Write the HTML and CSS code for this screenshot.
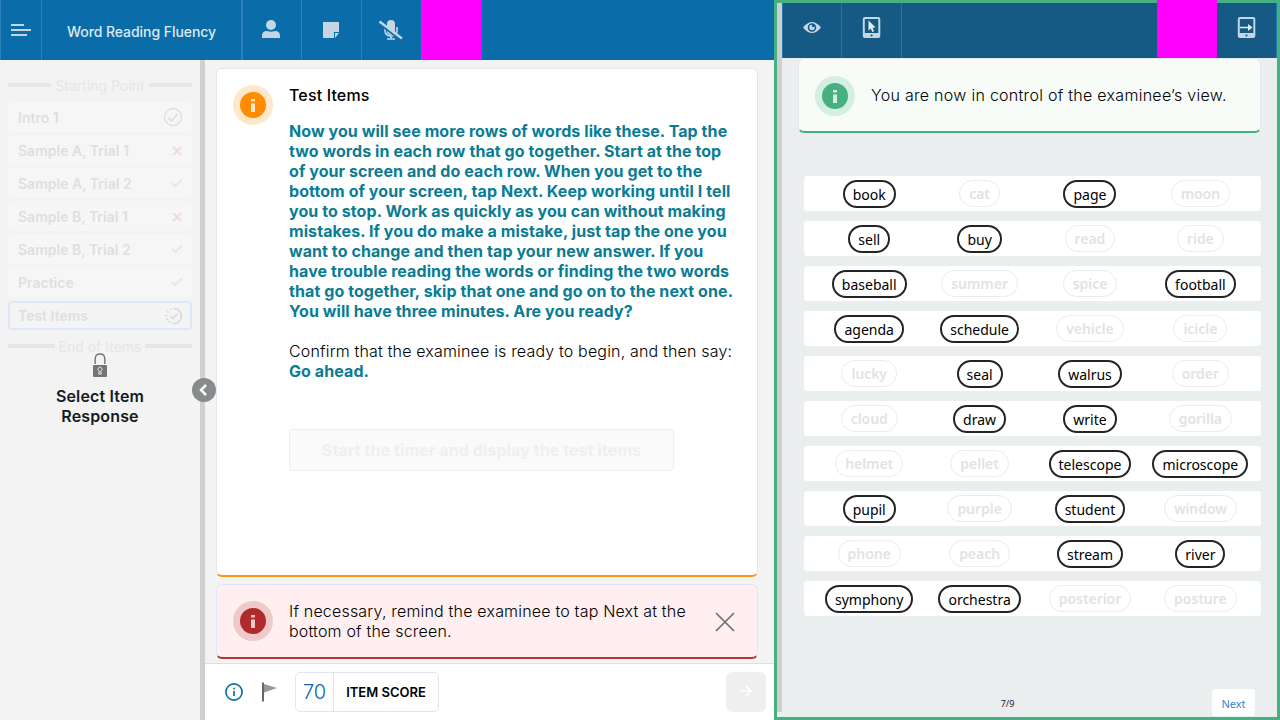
FILE: index.html
```html
<!DOCTYPE html>
<html lang="en">
<head>
<meta charset="utf-8">
<title>Word Reading Fluency</title>
<link rel="stylesheet" href="styles.css">
</head>
<body>
<div class="app">
  <section class="examiner">
    <header class="topbar">
      <div class="tool menu"><svg width="42" height="60" viewBox="0 0 42 60"><path d="M11 25h13M11 30h20M11 35h16" stroke="#c4d5e3" stroke-width="2"/></svg></div>
      <h1 class="title"><span>Word Reading Fluency</span></h1>
      <div class="tool"><svg width="60" height="60" viewBox="0 0 60 60" fill="#c4d5e3"><circle cx="28" cy="25" r="5"/><path d="M19 38v-2q0-5 5-5q4 1.500 8 0q5 0 5 5v2z"/></svg></div>
      <div class="tool"><svg width="60" height="60" viewBox="0 0 60 60"><path d="M21 22h16v10h-5v6H21z" fill="#c4d5e3"/><path d="M33 38v-5h4z" fill="#c4d5e3"/></svg></div>
      <div class="tool"><svg width="59" height="60" viewBox="0 0 59 60"><rect x="25" y="20" width="8" height="15" rx="4" fill="#c4d5e3"/><path d="M23 29v1q0 6 6 6t6-6v-3M29 36v3M25 39h8" fill="none" stroke="#c4d5e3" stroke-width="1.700"/><path d="M17 23.500l22 17" stroke="#0a6ca9" stroke-width="2"/><path d="M17.500 21.500l22.500 17" stroke="#c4d5e3" stroke-width="2.300"/></svg></div>
      <div class="block"></div>
    </header>
    <div class="workspace">
      <aside class="sidebar">
        <div class="divider teal"><span>Starting Point</span></div>
        <ul class="items">
          <li>Intro 1<svg width="20" height="20" viewBox="0 0 20 20" fill="none" stroke="#dedfdf"><circle cx="10" cy="10" r="8.500" stroke-width="1.300"/><path d="M5.500 11l3 3 6-7" stroke-width="1.800"/></svg></li>
          <li>Sample A, Trial 1<svg class="cross" viewBox="0 0 12 12"><path d="M2 2l8 8M10 2l-8 8"/></svg></li>
          <li>Sample A, Trial 2<svg class="check" viewBox="0 0 12 12"><path d="M1 6l3.500 3L11 2.500"/></svg></li>
          <li>Sample B, Trial 1<svg class="cross" viewBox="0 0 12 12"><path d="M2 2l8 8M10 2l-8 8"/></svg></li>
          <li>Sample B, Trial 2<svg class="check" viewBox="0 0 12 12"><path d="M1 6l3.500 3L11 2.500"/></svg></li>
          <li>Practice<svg class="check" viewBox="0 0 12 12"><path d="M1 6l3.500 3L11 2.500"/></svg></li>
          <li class="current">Test Items<svg width="18" height="18" viewBox="0 0 18 18" fill="none" stroke="#dadbdb" stroke-width="1.700"><path d="M9 1.500a7.500 7.500 0 0 1 0 15"/><path d="M9 16.500a7.500 7.500 0 0 1 0-15" stroke-dasharray="1.800 2"/><path d="M5.500 9l2.500 2.500 4.500-4.500" stroke-width="1.500"/></svg></li>
        </ul>
        <div class="divider end"><span>End of Items</span></div>
        <div class="locked">
          <svg width="16" height="25" viewBox="0 0 16 25"><path d="M3.200 11V6Q3.200 1 8 1t4.800 5v5" fill="none" stroke="#727676" stroke-width="1.400"/><rect x="1" y="12" width="14" height="12" rx="1" fill="#727676"/><path d="M6.700 21l.6-3a2 2 0 1 1 1.400 0l.6 3z" fill="none" stroke="#eee" stroke-width="1"/></svg>
          <p>Select Item<br>Response</p>
        </div>
      </aside>
      <div class="rail"><span class="collapse"><svg width="24" height="24" viewBox="0 0 24 24"><path d="M14 7l-5 5 5 5" fill="none" stroke="#fff" stroke-width="2.500"/></svg></span></div>
      <main class="main">
        <div class="cards">
          <article class="card orange">
            <svg class="info" viewBox="0 0 40 40"><circle cx="20" cy="20" r="20" fill="#ffe7cc"/><circle cx="20" cy="20" r="13" fill="#ff8b00"/><path d="M18 14h4v2.500h-4zM18 18.500h4V27h-4z" fill="#ffe7cc"/></svg>
            <div class="copy">
              <h2>Test Items</h2>
              <p class="say">Now you will see more rows of words like these. Tap the<br>two words in each row that go together. Start at the top<br>of your screen and do each row. When you get to the<br>bottom of your screen, tap Next. Keep working until I tell<br>you to stop. Work as quickly as you can without making<br>mistakes. If you do make a mistake, just tap the one you<br>want to change and then tap your new answer. If you<br>have trouble reading the words or finding the two words<br>that go together, skip that one and go on to the next one.<br>You will have three minutes. Are you ready?</p>
              <p class="confirm">Confirm that the examinee is ready to begin, and then say:</p>
              <p class="say">Go ahead.</p>
              <div class="start">Start the timer and display the test items</div>
            </div>
          </article>
          <article class="card red">
            <svg class="info" viewBox="0 0 40 40"><circle cx="20" cy="20" r="20" fill="#efcaca"/><circle cx="20" cy="20" r="13" fill="#b02a2d"/><path d="M18 14h4v2.500h-4zM18 18.500h4V27h-4z" fill="#efcaca"/></svg>
            <p class="remind">If necessary, remind the examinee to tap Next at the<br>bottom of the screen.</p>
            <svg class="close" viewBox="0 0 20 20"><path d="M1 1l18 18M19 1L1 19" stroke="#687078" stroke-width="1.700"/></svg>
          </article>
        </div>
        <footer class="footer">
          <svg width="18" height="18" viewBox="0 0 18 18"><circle cx="9" cy="9" r="8.100" fill="none" stroke="#0f6dab" stroke-width="1.700"/><path d="M8.200 4.700h1.700v1.800H8.200zM8.200 8h1.700v5H8.200z" fill="#0f6dab"/></svg>
          <svg class="flag" width="17" height="20" viewBox="0 0 17 20"><path d="M2 2l13 4-13 4.500z" fill="#989898"/><path d="M1 .500v19" stroke="#666" stroke-width="2"/></svg>
          <div class="score"><span class="value">70</span><span class="label">ITEM SCORE</span></div>
          <div class="forward"><svg width="14" height="14" viewBox="0 0 14 14"><path d="M1 7h11M7 2l5 5-5 5" fill="none" stroke="#fff" stroke-width="1.700"/></svg></div>
        </footer>
      </main>
    </div>
  </section>
  <section class="examinee">
    <div class="scroll"></div>
    <div class="view">
      <header class="viewbar">
        <div class="vtool"><svg width="58" height="55" viewBox="0 0 58 55"><path d="M20 24.500q9-11 18 0q-9 11-18 0z" fill="#c4d5e3"/><circle cx="29" cy="24.500" r="3.500" fill="#c4d5e3" stroke="#155a85" stroke-width="1.500"/><path d="M29 24v-2.500a2.500 2.500 0 0 1 2.500 2.500z" fill="#155a85"/></svg></div>
        <div class="vtool wide"><svg width="59" height="55" viewBox="0 0 59 55"><rect x="21.800" y="15" width="15.500" height="19" rx="1" fill="none" stroke="#c4d5e3" stroke-width="2"/><path d="M22 30h15v4H22z" fill="#c4d5e3"/><circle cx="29.500" cy="32.500" r="1.100" fill="#155a85"/><path d="M26.500 17.500v10l2.300-2 1.500 3.500 1.800-.8-1.500-3.400 3-.3z" fill="#e4edf4"/></svg></div>
        <div class="block"></div>
        <div class="vtool out"><svg width="59" height="55" viewBox="0 0 59 55"><rect x="21.800" y="15" width="15.500" height="19" rx="1" fill="none" stroke="#c4d5e3" stroke-width="2"/><path d="M22 30h15v4H22z" fill="#c4d5e3"/><circle cx="29.500" cy="32.500" r="1.100" fill="#155a85"/><path d="M23 24.500h9" stroke="#e4edf4" stroke-width="1.500"/><path d="M31 21l4.500 3.500L31 28z" fill="#e4edf4"/></svg></div>
      </header>
      <div class="notice">
        <svg class="info" viewBox="0 0 40 40"><circle cx="20" cy="20" r="20" fill="#d4eee1"/><circle cx="20" cy="20" r="13" fill="#46b081"/><path d="M18 14h4v2.500h-4zM18 18.500h4V27h-4z" fill="#d4eee1"/></svg>
        <p>You are now in control of the examinee’s view.</p>
      </div>
      <div class="rows">
        <div class="row"><div><b class="on">book</b></div><div><b>cat</b></div><div><b class="on">page</b></div><div><b>moon</b></div></div>
        <div class="row"><div><b class="on">sell</b></div><div><b class="on">buy</b></div><div><b>read</b></div><div><b>ride</b></div></div>
        <div class="row"><div><b class="on">baseball</b></div><div><b>summer</b></div><div><b>spice</b></div><div><b class="on">football</b></div></div>
        <div class="row"><div><b class="on">agenda</b></div><div><b class="on">schedule</b></div><div><b>vehicle</b></div><div><b>icicle</b></div></div>
        <div class="row"><div><b>lucky</b></div><div><b class="on">seal</b></div><div><b class="on">walrus</b></div><div><b>order</b></div></div>
        <div class="row"><div><b>cloud</b></div><div><b class="on">draw</b></div><div><b class="on">write</b></div><div><b>gorilla</b></div></div>
        <div class="row"><div><b>helmet</b></div><div><b>pellet</b></div><div><b class="on">telescope</b></div><div><b class="on">microscope</b></div></div>
        <div class="row"><div><b class="on">pupil</b></div><div><b>purple</b></div><div><b class="on">student</b></div><div><b>window</b></div></div>
        <div class="row"><div><b>phone</b></div><div><b>peach</b></div><div><b class="on">stream</b></div><div><b class="on">river</b></div></div>
        <div class="row"><div><b class="on">symphony</b></div><div><b class="on">orchestra</b></div><div><b>posterior</b></div><div><b>posture</b></div></div>
      </div>
      <div class="pager"><span class="page">7/9</span><span class="next">Next</span></div>
    </div>
  </section>
</div>
</body>
</html>
```
FILE: styles.css
```css
* { box-sizing: border-box; }
body { margin: 0; font-family: Inter, "Liberation Sans", sans-serif; }
h1, h2, p, ul { margin: 0; padding: 0; }
svg { display: block; flex: none; }
.app { display: flex; width: 1280px; height: 720px; overflow: hidden; }
.examiner { width: 774px; display: flex; flex-direction: column; }
.topbar { height: 60px; flex: none; display: flex; background: #0a6ca9; }
.tool { width: 60px; border-right: 1px solid #2b81b9; }
.menu { width: 42px; border-left: 1px solid #2b81b9; }
.menu svg { margin-left: -1px; }
.title { width: 201px; border-right: 2px solid #2b81b9; font-size: 14px; font-weight: 500; letter-spacing: -.06px; color: #dce9f3; display: flex; align-items: center; justify-content: center; white-space: nowrap; padding-top: 2px; }
.tool:nth-child(3) { width: 59px; }
.block { width: 60px; background: #f0f; }
.workspace { flex: 1; display: flex; min-height: 0; }
.sidebar { width: 200px; background: #f3f3f3; padding: 15px 8px 0; }
.divider { height: 20px; display: flex; align-items: center; gap: 4px; font-size: 14px; color: #e5e6e6; white-space: nowrap; }
.divider::before, .divider::after { content: ""; flex: 1; height: 4px; background: #e6e6e6; }
.teal::before, .teal::after { background: #e4e8e7; }
.items { list-style: none; padding-top: 7px; display: grid; gap: 3px; }
.items li { height: 30px; display: flex; align-items: center; justify-content: space-between; padding: 0 9px 0 10px; background: #f6f6f6; border-radius: 4px; font-size: 14px; font-weight: 600; color: #dedfdf; }
.items li .cross { margin-top: 1px; }
.items .current { background: #f4f4f4; border: 2px solid #dce9f4; padding: 0 7px 0 8px; height: 29px; margin-top: 1px; }
.cross, .check { width: 12px; height: 12px; fill: none; stroke-width: 2.300; stroke: #efdcdd; }
.check { stroke: #dfece7; }
.end { margin-top: 6px; }
.locked { margin-top: -3px; display: flex; flex-direction: column; align-items: center; text-align: center; font-size: 16px; line-height: 20px; font-weight: 600; letter-spacing: .15px; color: #171a1b; }
.locked p { margin-top: 8px; }
.rail { width: 5px; background: #cfcfcf; position: relative; }
.collapse { position: absolute; left: -8px; top: 318px; width: 24px; height: 24px; border-radius: 50%; background: #878b8b; }
.main { width: 569px; display: flex; flex-direction: column; background: #f3f3f3; }
.cards { flex: 1; padding: 8px 16px 4px 11px; display: flex; flex-direction: column; gap: 7px; }
.card { display: flex; border: 1px solid #e1e5ef; border-radius: 6px; background: #fff; padding: 16px 16px 0; font-size: 16px; line-height: 20px; white-space: nowrap; }
.orange { height: 509px; border-bottom: 2px solid #ff9419; }
.info { width: 40px; height: 40px; }
.copy { margin-left: 16px; }
.copy h2 { font-size: 16px; line-height: 20px; font-weight: 500; margin-bottom: 16px; letter-spacing: .15px; }
.say { font-weight: 700; color: #0a7c94; letter-spacing: .08px; }
.confirm { margin-top: 20px; font-weight: 300; letter-spacing: .17px; }
.start { margin-top: 48px; width: 385px; height: 42px; border: 1px solid #eee; border-radius: 3px; background: #fafafa; display: flex; align-items: center; justify-content: center; color: #efefef; font-weight: 700; letter-spacing: .09px; }
.card.red { height: 75px; background: #ffeff0; border-bottom: 2px solid #b33339; }
.remind { margin-left: 16px; width: 426px; font-weight: 300; letter-spacing: .19px; }
.close { width: 20px; height: 20px; margin-top: 11px; }
.footer { height: 57px; background: #fff; border-top: 1px solid #dedede; display: flex; align-items: center; padding: 0 8px 0 20px; }
.flag { margin-left: 19px; }
.score { width: 144px; height: 40px; margin-left: 16px; display: flex; border: 1px solid #e1e5ef; border-radius: 5px; }
.value { width: 38px; border-right: 1px solid #e1e5ef; font-size: 20px; font-weight: 300; color: #0f62ae; display: flex; align-items: center; justify-content: center; }
.label { flex: 1; display: flex; align-items: center; justify-content: center; font-size: 13px; font-weight: 600; }
.forward { width: 40px; height: 40px; margin-left: auto; border-radius: 6px; background: #efefef; display: flex; align-items: center; justify-content: center; }
.forward svg { margin-top: -2px; }
.examinee { width: 506px; border: 3px solid #46b081; display: flex; background: #eaeeef; }
.scroll { width: 5px; height: 709px; background: #cfcfcf; }
.view { width: 495px; display: flex; flex-direction: column; }
.viewbar { display: flex; height: 55px; background: #155a85; border-left: 1px solid #1f78af; border-right: 1px solid #1f78af; }
.vtool { width: 59px; border-right: 1px solid #2574a7; }
.wide { width: 60px; }
.viewbar .block { margin: -3px 0 0 auto; height: 58px; }
.out { border: 0; }
.notice { width: 463px; height: 75px; margin: 0 16px; display: flex; padding: 17px 16px; border: 1px solid #e0e8ec; border-bottom: 2px solid #46b081; border-radius: 6px; background: #f7fcf9; }
.notice p { margin: 8px 0 0 16px; font-size: 16px; line-height: 22px; font-weight: 300; letter-spacing: .28px; white-space: nowrap; }
.rows { margin: 43px 16px 0 22px; display: grid; gap: 10px; }
.row { width: 457px; height: 35px; padding: 0 5px 0 10px; background: #fff; border-radius: 3px; display: grid; grid-template-columns: repeat(4, 110.400px); }
.row div { display: flex; align-items: center; justify-content: center; }
.row b { height: 27px; border: 1px solid #ebebeb; border-radius: 14px; padding: 0 9px; font: 600 14px/26px "Noto Sans", sans-serif; letter-spacing: -.05px; color: #e2e3e4; }
.row .on { height: 28px; border: 2px solid #242424; padding: 0 8px; font-weight: 400; letter-spacing: 0; color: #000; line-height: 25px; }
.pager { margin-top: auto; height: 27px; display: grid; grid-template-columns: 451px 43px; font-family: "Noto Sans", sans-serif; }
.page { font-size: 9px; line-height: 27px; color: #222; text-align: center; }
.next { margin-left: -21px; margin-top: -1px; height: 27px; width: 43px; background: #fff; border-radius: 3px; font-size: 11px; line-height: 29px; text-align: center; color: #3286cb; }
```
